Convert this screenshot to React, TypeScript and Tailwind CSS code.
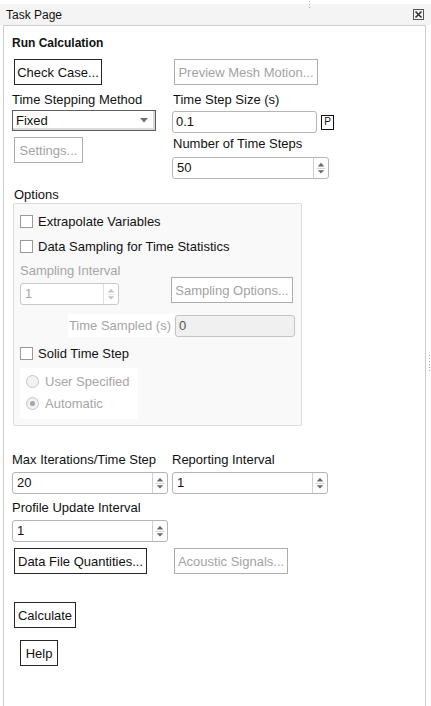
import React from 'react'

const FONT = { fontFamily: '"Liberation Sans", Arial, sans-serif' }

function Btn({ label, w, disabled, className = '' }: { label: string; w: number; disabled?: boolean; className?: string }) {
  return (
    <div
      className={`h-[26px] flex items-center justify-center bg-white border text-[13px] leading-[15px] whitespace-nowrap ${
        disabled ? 'border-[#adadad] text-[#a3a3a3]' : 'border-[#262626] text-[#111]'
      } ${className}`}
      style={{ width: w }}
    >
      {label}
    </div>
  )
}

function Arrows({ disabled }: { disabled?: boolean }) {
  const c = disabled ? '#c4c4c4' : '#6a6a6a'
  return (
    <svg width="15" height="20" viewBox="0 0 15 20">
      <path d="M4 8.5 L7.5 4.5 L11 8.5 Z" fill={c} />
      <line x1="3" y1="10.5" x2="12" y2="10.5" stroke={disabled ? '#e6e6e6' : '#d0d0d0'} />
      <path d="M4 12.5 L7.5 16 L11 12.5 Z" fill={c} />
    </svg>
  )
}

function Spinner({ w, value, disabled, className = '' }: { w: number; value: string; disabled?: boolean; className?: string }) {
  return (
    <div
      className={`h-[22px] flex bg-white border rounded-[3px] ${disabled ? 'border-[#c9c9c9]' : 'border-[#b5b5b5]'} ${className}`}
      style={{ width: w }}
    >
      <div className={`flex-1 flex items-center pl-[4px] text-[13px] ${disabled ? 'text-[#a6a6a6]' : 'text-[#111]'}`}>{value}</div>
      <div className={`w-[15px] flex items-center justify-center border-l ${disabled ? 'border-[#dedede]' : 'border-[#cfcfcf]'}`}>
        <Arrows disabled={disabled} />
      </div>
    </div>
  )
}

function Check({ label }: { label: string }) {
  return (
    <div className="h-[15px] flex items-center gap-[5px]">
      <div className="w-[13px] h-[13px] border border-[#9a9a9a] bg-white" />
      <span className="text-[13px] leading-[15px] text-[#111]">{label}</span>
    </div>
  )
}

function Radio({ label, on }: { label: string; on?: boolean }) {
  return (
    <div className="h-[15px] flex items-center gap-[6px]">
      <div className="w-[13px] h-[13px] rounded-full border border-[#c6c6c6] bg-[#f2f2f2] flex items-center justify-center">
        {on && <div className="w-[5px] h-[5px] rounded-full bg-[#a6a6a6]" />}
      </div>
      <span className="text-[13px] leading-[15px] text-[#a6a6a6]">{label}</span>
    </div>
  )
}

const Label = ({ children, gray, className = '' }: { children: React.ReactNode; gray?: boolean; className?: string }) => (
  <div className={`h-[15px] text-[13px] leading-[15px] whitespace-nowrap ${gray ? 'text-[#a6a6a6]' : 'text-[#111]'} ${className}`}>{children}</div>
)

export default function App() {
  return (
    <div className="relative w-[431px] h-[706px] bg-white overflow-hidden" style={FONT}>
      {/* splitter dots */}
      <div className="absolute left-[309px] top-[1px] flex flex-col gap-[2px]">
        {[0, 1, 2].map(i => <div key={i} className="w-[1px] h-[1px] bg-[#b0b0b0]" />)}
      </div>
      <div className="absolute left-[429px] top-[355px] flex flex-col gap-[2px]">
        {[0, 1, 2, 3, 4, 5].map(i => <div key={i} className="w-[1px] h-[1px] bg-[#a8a8a8]" />)}
      </div>

      {/* Header */}
      <div className="mt-[4px] h-[21px] bg-[#f4f4f4] flex items-center justify-between pl-[6px] pr-[7px]">
        <span className="text-[12px] text-[#111]">Task Page</span>
        <div className="w-[11px] h-[11px] border border-[#555] flex items-center justify-center">
          <svg width="9" height="9" viewBox="0 0 9 9">
            <path d="M1.5 1.5 L7.5 7.5 M7.5 1.5 L1.5 7.5" stroke="#333" strokeWidth="1.6" />
          </svg>
        </div>
      </div>

      {/* Panel */}
      <div className="ml-[3px] w-[423px] h-[690px] border border-b-0 border-[#cdcdcd] pl-[8px]">
        <div className="mt-[10px] h-[15px] text-[12px] leading-[15px] font-bold text-[#111]">Run Calculation</div>

        <div className="mt-[8px] flex">
          <Btn label="Check Case..." w={88} className="ml-[2px]" />
          <Btn label="Preview Mesh Motion..." w={144} disabled className="ml-[72px]" />
        </div>

        <div className="flex">
          <div className="w-[160px]">
            <Label className="mt-[7px]">Time Stepping Method</Label>
            <div className="mt-[3px] w-[144px] h-[21px] flex items-center bg-white border border-[#5e5e5e] shadow-[inset_-2px_-2px_0_#dadada]">
              <span className="flex-1 pl-[3px] text-[13px] text-[#111]">Fixed</span>
              <svg width="8" height="5" viewBox="0 0 8 5" className="mr-[7px]">
                <path d="M0 0 L8 0 L4 4.5 Z" fill="#6e6e6e" />
              </svg>
            </div>
            <Btn label="Settings..." w={69} disabled className="mt-[6px] ml-[2px]" />
          </div>
          <div>
            <Label className="mt-[7px] ml-[1px]">Time Step Size (s)</Label>
            <div className="mt-[4px] flex items-center">
              <div className="w-[145px] h-[22px] flex items-center pl-[3px] bg-white border border-[#b5b5b5] rounded-[3px] text-[13px] text-[#111]">0.1</div>
              <div className="ml-[4px] w-[13px] h-[15px] border border-[#111] flex items-center justify-center text-[10px] leading-none text-[#111]">P</div>
            </div>
            <Label className="mt-[3px] ml-[1px]">Number of Time Steps</Label>
            <Spinner w={157} value="50" className="mt-[6px]" />
          </div>
        </div>

        <Label className="mt-[8px] ml-[2px]">Options</Label>
        <div className="mt-[1px] ml-[1px] w-[289px] h-[223px] border border-[#dcdcdc] rounded-[2px] bg-[#f9f9f9] pl-[6px]">
          <div className="mt-[10px]"><Check label="Extrapolate Variables" /></div>
          <div className="mt-[10px]"><Check label="Data Sampling for Time Statistics" /></div>
          <div className="flex">
            <div className="w-[99px]">
              <Label gray className="mt-[9px]">Sampling Interval</Label>
              <Spinner w={99} value="1" disabled className="mt-[5px]" />
            </div>
            <Btn label="Sampling Options..." w={122} disabled className="mt-[23px] ml-[52px]" />
          </div>
          <div className="mt-[9px] flex items-center">
            <div className="ml-[48px] w-[106px] h-[23px] bg-white flex items-center justify-end pr-[3px]">
              <Label gray>Time Sampled (s)</Label>
            </div>
            <div className="ml-[1px] w-[120px] h-[22px] flex items-center pl-[3px] bg-[#f0f0f0] border border-[#c4c4c4] rounded-[3px] text-[13px] text-[#555]">0</div>
          </div>
          <div className="mt-[9px]"><Check label="Solid Time Step" /></div>
          <div className="mt-[7px] w-[118px] h-[51px] bg-white pl-[6px] pt-[6px] flex flex-col gap-[7px]">
            <Radio label="User Specified" />
            <Radio label="Automatic" on />
          </div>
        </div>

        <div className="mt-[26px] flex">
          <Label className="w-[160px]">Max Iterations/Time Step</Label>
          <Label>Reporting Interval</Label>
        </div>
        <div className="mt-[5px] flex">
          <Spinner w={156} value="20" />
          <Spinner w={156} value="1" className="ml-[4px]" />
        </div>
        <Label className="mt-[6px]">Profile Update Interval</Label>
        <Spinner w={156} value="1" className="mt-[5px]" />

        <div className="mt-[6px] flex">
          <Btn label="Data File Quantities..." w={133} className="ml-[2px]" />
          <Btn label="Acoustic Signals..." w={114} disabled className="ml-[27px]" />
        </div>

        <Btn label="Calculate" w={62} className="mt-[28px] ml-[2px]" />
        <Btn label="Help" w={38} className="mt-[12px] ml-[8px]" />
      </div>
    </div>
  )
}
